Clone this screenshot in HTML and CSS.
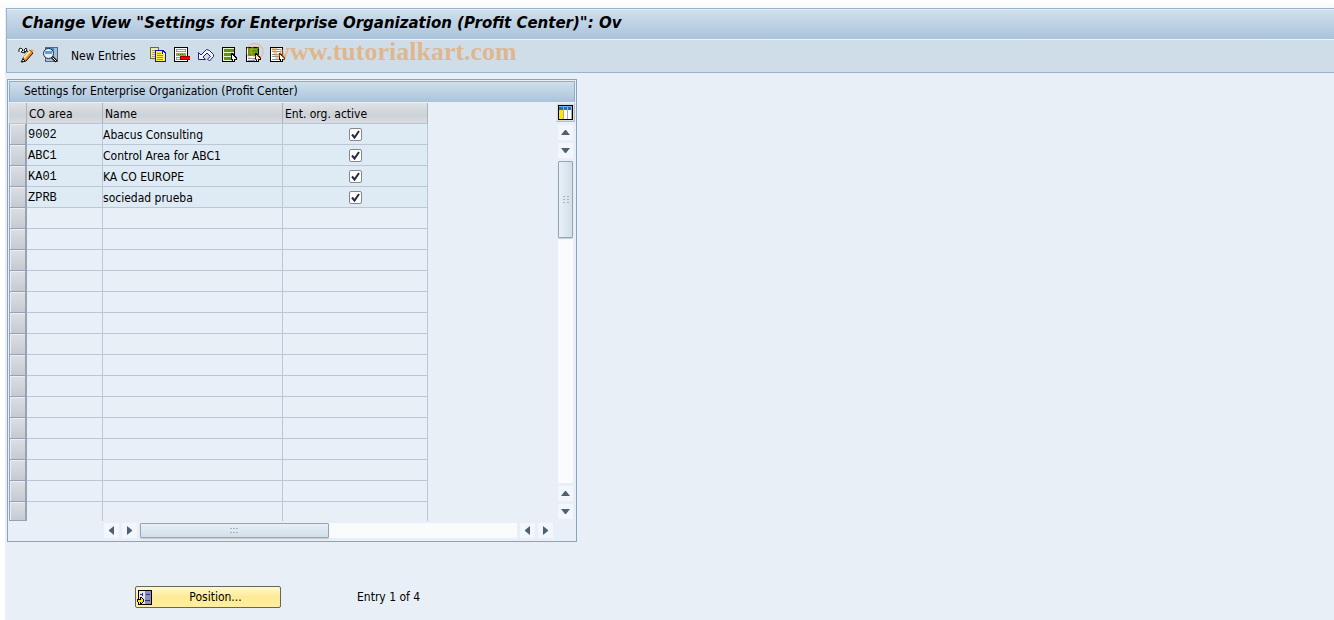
FILE: index.html
```html
<!DOCTYPE html>
<html lang="en">
<head>
    <meta charset="UTF-8">
    <meta name="viewport" content="width=device-width, initial-scale=1.0">
    <title>Change View</title>
    <link rel="stylesheet" href="styles.css">
</head>
<body>
    <header class="app-header">
        <h1 class="title">Change View "Settings for Enterprise Organization (Profit Center)": Ov</h1>
        <div class="toolbar">
            <button class="tool" aria-label="Display / Change">
                <svg width="16" height="16" viewBox="0 0 16 16">
                    <path d="M1 5V2L3 1L5 3L3 5L7 6L6 3L8 1L9 3L7 5L9 4L11 5" fill="#fff" stroke="#111" stroke-width="1"/>
                    <path d="M4 15L5 11L12 3L15 6L8 14Z" fill="#f08a1c" stroke="#111" stroke-width="1"/>
                    <path d="M6 11L12 4" stroke="#ffe9a0" stroke-width="2"/>
                    <path d="M3 15L5 12L7 14Z" fill="#fff" stroke="#111" stroke-width="1"/>
                    <path d="M12 3L14 2L16 4L15 6Z" fill="#f5a860"/>
                </svg>
            </button>
            <button class="tool" aria-label="Details">
                <svg width="16" height="16" viewBox="0 0 16 16">
                    <path d="M3 0h13v15H3z" fill="#5a6676" shape-rendering="crispEdges"/>
                    <path d="M4 1h11v13H4z" fill="#a9bcd0" shape-rendering="crispEdges"/>
                    <path d="M4 1h8v4H4z" fill="#2d8fe0"/>
                    <circle cx="6.500" cy="6.500" r="5" fill="#e2f0fc" stroke="#202838"/>
                    <path d="M3 4h7v3H3z" fill="#4aa4ec"/>
                    <path d="M10 10L14.500 14.500" stroke="#111" stroke-width="3"/>
                    <path d="M10.500 10.500L14 14" stroke="#eee" stroke-width="1"/>
                </svg>
            </button>
            <button class="tool-text">New Entries</button>
            <button class="tool" aria-label="Copy As">
                <svg width="16" height="16" viewBox="0 0 16 16" shape-rendering="crispEdges">
                    <path d="M0 0h9v12H0z" fill="#6b6b30"/>
                    <path d="M1 1h7v10H1z" fill="#f0ecb0"/>
                    <path d="M2 3h3v1H2zM2 5h3v1H2zM2 7h3v1H2zM2 9h3v1H2z" fill="#a5a560"/>
                    <path d="M5 3h8l3 3v9H5z" fill="#1010c0"/>
                    <path d="M6 4h6v3h3v7H6z" fill="#fff04a"/>
                    <path d="M13 5l2 2h-2z" fill="#fff"/>
                    <path d="M7 6h4v1H7zM7 8h6v1H7zM7 10h6v1H7zM7 12h6v1H7z" fill="#8c8c70"/>
                </svg>
            </button>
            <button class="tool" aria-label="Delete">
                <svg width="16" height="16" viewBox="0 0 16 16" shape-rendering="crispEdges">
                    <path d="M0 0h14v15H0z" fill="#000"/>
                    <path d="M1 1h12v13H1z" fill="#fff"/>
                    <path d="M2 2h10v3H2zM2 10h10v3H2z" fill="#8f97ac"/>
                    <path d="M3 3h8v1H3zM3 11h8v1H3z" fill="#fff"/>
                    <path d="M2 6h10v3H2z" fill="#86b32d"/>
                    <path d="M4 7h1v1H4zM6 7h1v1H6zM8 7h1v1H8z" fill="#4c7d10"/>
                    <path d="M6 9h10v4H6z" fill="#900"/>
                    <path d="M7 10h9v2H7z" fill="#f00"/>
                </svg>
            </button>
            <button class="tool" aria-label="Undo Change">
                <svg width="16" height="16" viewBox="0 0 16 16">
                    <path d="M.5 5.500V12.500H7.500L5 10L9 6L12.500 9.500L9.500 12L11.500 14L15.500 9.500V7.500L11.500 3.500L8.500 2.500L3 8Z" fill="#f6f8ff" stroke="#20208c" stroke-width="1"/>
                </svg>
            </button>
            <button class="tool" aria-label="Select All">
                <svg width="16" height="16" viewBox="0 0 16 16" shape-rendering="crispEdges">
                    <path d="M0 0h13v15H0z" fill="#000"/>
                    <path d="M1 1h11v13H1z" fill="#e9f3cc"/>
                    <path d="M2 2h10v3H2zM2 6h10v3H2zM2 10h10v3H2z" fill="#5f9410"/>
                    <path d="M9 6h1l5 5v2h-2v2h-2l-1-2H9z" fill="#000"/>
                    <path d="M10 8l4 4h-2v2h-1v-2h-1z" fill="#fff"/>
                </svg>
            </button>
            <button class="tool" aria-label="Select Block">
                <svg width="16" height="16" viewBox="0 0 16 16" shape-rendering="crispEdges">
                    <path d="M0 0h13v15H0z" fill="#000"/>
                    <path d="M1 1h11v13H1z" fill="#fff"/>
                    <path d="M2 1h10v8H2z" fill="#5f9410"/>
                    <path d="M3 2h8v1H3zM3 5h8v1H3z" fill="#78a828"/>
                    <path d="M2 11h7v1H2zM2 13h7v1H2z" fill="#8f97ac"/>
                    <path d="M9 6h1l5 5v2h-2v2h-2l-1-2H9z" fill="#000"/>
                    <path d="M10 8l4 4h-2v2h-1v-2h-1z" fill="#fff"/>
                </svg>
            </button>
            <button class="tool" aria-label="Deselect All">
                <svg width="16" height="16" viewBox="0 0 16 16" shape-rendering="crispEdges">
                    <path d="M0 0h13v15H0z" fill="#000"/>
                    <path d="M1 1h11v13H1z" fill="#fff"/>
                    <path d="M2 2h9v1H2zM2 4h9v1H2zM2 7h9v1H2zM2 9h7v1H2zM2 12h7v1H2z" fill="#8298aa"/>
                    <path d="M9 6h1l5 5v2h-2v2h-2l-1-2H9z" fill="#000"/>
                    <path d="M10 8l4 4h-2v2h-1v-2h-1z" fill="#fff"/>
                </svg>
            </button>
        </div>
        <span class="watermark"><span class="copy-sign">©</span> www.tutorialkart.com</span>
    </header>

    <main class="content">
        <section class="panel">
            <h2 class="panel-title">Settings for Enterprise Organization (Profit Center)</h2>
            <div class="panel-body">
                <table class="grid">
                    <thead>
                        <tr>
                            <th class="col-sel"></th>
                            <th class="col-area">CO area</th>
                            <th class="col-name">Name</th>
                            <th class="col-active">Ent. org. active</th>
                        </tr>
                    </thead>
                    <tbody id="rows">
                        <tr class="filled"><td class="sel"></td><td class="code">9002</td><td>Abacus Consulting</td><td class="check"><input type="checkbox" aria-label="9002 active" checked></td></tr>
                        <tr class="filled"><td class="sel"></td><td class="code">ABC1</td><td>Control Area for ABC1</td><td class="check"><input type="checkbox" aria-label="ABC1 active" checked></td></tr>
                        <tr class="filled"><td class="sel"></td><td class="code">KA01</td><td>KA CO EUROPE</td><td class="check"><input type="checkbox" aria-label="KA01 active" checked></td></tr>
                        <tr class="filled"><td class="sel"></td><td class="code">ZPRB</td><td>sociedad prueba</td><td class="check"><input type="checkbox" aria-label="ZPRB active" checked></td></tr>
                    </tbody>
                </table>

                <div class="vscroll">
                    <button class="config" aria-label="Configuration">
                        <svg width="15" height="15" viewBox="0 0 15 15" shape-rendering="crispEdges">
                            <path d="M0 0h15v15H0z" fill="#000"/>
                            <path d="M1 1h13v4H1z" fill="#1c6fb8"/>
                            <path d="M1 1h13v1H1z" fill="#6db8ee"/>
                            <path d="M1 5h5v9H1z" fill="#ffe600"/>
                            <path d="M6 5h8v9H6z" fill="#fff"/>
                            <path d="M5 2h1v12H5zM9 2h1v12H9zM13 2h1v12h-1z" fill="#a5adb8"/>
                        </svg>
                    </button>
                    <button class="arrow" aria-label="Scroll up"><svg width="9" height="5" viewBox="0 0 9 5"><path d="M0 5L4 0H5L9 5Z"/></svg></button>
                    <button class="arrow" aria-label="Scroll down"><svg width="9" height="5" viewBox="0 0 9 5"><path d="M0 0L4 5H5L9 0Z"/></svg></button>
                    <div class="track">
                        <div class="thumb"><svg width="6" height="8" viewBox="0 0 6 8" shape-rendering="crispEdges"><path d="M0 0h2v1H0zM4 0h2v1H4zM0 3h2v1H0zM4 3h2v1H4zM0 6h2v1H0zM4 6h2v1H4z"/></svg></div>
                    </div>
                    <button class="arrow" aria-label="Page up"><svg width="9" height="5" viewBox="0 0 9 5"><path d="M0 5L4 0H5L9 5Z"/></svg></button>
                    <button class="arrow" aria-label="Page down"><svg width="9" height="5" viewBox="0 0 9 5"><path d="M0 0L4 5H5L9 0Z"/></svg></button>
                </div>

                <div class="hscroll">
                    <button class="arrow" aria-label="Scroll left"><svg width="5" height="9" viewBox="0 0 5 9"><path d="M5 0L0 4V5L5 9Z"/></svg></button>
                    <button class="arrow" aria-label="Scroll right"><svg width="5" height="9" viewBox="0 0 5 9"><path d="M0 0L5 4V5L0 9Z"/></svg></button>
                    <div class="track">
                        <div class="thumb"><svg width="8" height="6" viewBox="0 0 8 6" shape-rendering="crispEdges"><path d="M0 0h2v1H0zM3 0h2v1H3zM6 0h2v1H6zM0 4h2v1H0zM3 4h2v1H3zM6 4h2v1H6z"/></svg></div>
                    </div>
                    <button class="arrow" aria-label="Page left"><svg width="5" height="9" viewBox="0 0 5 9"><path d="M5 0L0 4V5L5 9Z"/></svg></button>
                    <button class="arrow" aria-label="Page right"><svg width="5" height="9" viewBox="0 0 5 9"><path d="M0 0L5 4V5L0 9Z"/></svg></button>
                </div>
            </div>
        </section>

        <div class="footer">
            <button class="position-btn">
                <svg width="15" height="15" viewBox="0 0 15 15" shape-rendering="crispEdges">
                    <path d="M1 0h14v15H1z" fill="#000"/>
                    <path d="M2 1h12v13H2z" fill="#dfe4ee"/>
                    <path d="M8 1h6v13H8z" fill="#8b8cc4"/>
                    <path d="M3 4h3v1H3zM5 3h1v3H5zM9 4h4v1H9zM8 10h5v1H8z" fill="#303850"/>
                    <path d="M0 9h3V7h1l3 3v1l-3 3H3v-2H0z" fill="#000"/>
                    <path d="M1 10h3V8l2 2v1l-2 2v-1H1z" fill="#ffe800"/>
                </svg>
                <span>Position...</span>
            </button>
            <span>Entry 1 of 4</span>
        </div>
    </main>

    <script>
        // fill the rest of the table control with empty rows
        const rows = document.getElementById('rows');
        const emptyRows = 15;
        for (let i = 0; i < emptyRows; i++) {
            const row = document.createElement('tr');
            row.innerHTML = '<td class="sel"></td><td></td><td></td><td></td>';
            rows.appendChild(row);
        }
    </script>
</body>
</html>
```
FILE: styles.css
```css
* {
    box-sizing: border-box;
}

body {
    margin: 0;
    padding: 8px 0 0 6px;
    min-height: 100vh;
    background: linear-gradient(#fff, #f6f9fc) 0 0 / 100% 8px no-repeat,
        linear-gradient(90deg, #fff 5px, #e8eff6 5px);
    font-family: "DejaVu Sans Condensed", "Noto Sans", sans-serif;
    font-size: 12px;
    line-height: 16px;
    color: #000;
}

button {
    margin: 0;
    padding: 0;
    border: none;
    background: none;
    font: inherit;
    color: inherit;
    cursor: pointer;
}

svg {
    display: block;
}

.app-header {
    position: relative;
    border: 1px solid #9bb2c9;
    border-right: none;
}

.title {
    margin: 0;
    padding: 1px 15px 4px;
    border-top: 1px solid #e4eef6;
    background: linear-gradient(#cfdfec, #aac3db);
    font-family: "DejaVu Sans", sans-serif;
    font-size: 15px;
    font-style: italic;
    line-height: 24px;
    white-space: nowrap;
}

.toolbar {
    display: flex;
    align-items: center;
    gap: 8px;
    height: 33px;
    padding: 0 11px 2px;
    border-top: 1px solid #eef4f9;
    background: #cfdde8;
}

.tool-text {
    padding: 1px 6px 0 5px;
}

.watermark {
    position: absolute;
    left: 238px;
    top: 28px;
    font: bold 26px/30px "Liberation Serif", serif;
    color: rgba(240, 150, 60, 0.55);
    white-space: nowrap;
    pointer-events: none;
}

.copy-sign {
    font-weight: normal;
}

.content {
    padding: 6px 1px;
}

.panel {
    max-width: 570px;
    padding: 1px;
    border: 1px solid #86a5c3;
}

.panel-title {
    margin: 0 0 1px;
    padding: 1px 14px 3px;
    border: 1px solid #93abc3;
    border-bottom: none;
    background: linear-gradient(#cfdfec, #aac3db);
    font-size: 12px;
    font-weight: normal;
    line-height: 16px;
}

.panel-body {
    display: grid;
    grid-template-columns: 1fr 19px;
}

.grid {
    width: 419px;
    table-layout: fixed;
    border-collapse: separate;
    border-spacing: 0;
}

.grid th {
    height: 21px;
    padding: 2px 2px 0;
    border-right: 1px solid #a9b3c2;
    border-bottom: 1px solid #b8c4d0;
    background: linear-gradient(#dfe2e5, #cdd2d8 60%, #d9dde1);
    font-weight: normal;
    text-align: left;
}

.col-sel {
    width: 18px;
}

.col-area {
    width: 76px;
}

.col-name {
    width: 180px;
}

.grid td {
    height: 21px;
    padding: 2px 0 0;
    border-right: 1px solid #bcc6d4;
    border-bottom: 1px solid #bcc6d4;
}

.filled td {
    background: #deebf5;
}

.grid .sel {
    border: 1px solid #98a2b4;
    border-top: none;
    border-right-width: 2px;
    background: linear-gradient(#dcdfe4, #c5cad2);
    box-shadow: inset 1px 1px #eceef1;
}

.grid tr:last-child td {
    height: 19px;
}

.grid tr:last-child td:not(.sel) {
    border-bottom: none;
}

.grid .code {
    padding-left: 1px;
    font-family: "Liberation Mono", monospace;
}

.grid .check {
    padding: 0;
    line-height: 0;
    text-align: center;
}

.check input {
    appearance: none;
    width: 13px;
    height: 13px;
    margin: 0;
    border: 1px solid #85878c;
    border-radius: 2px;
    background: #fff;
    vertical-align: middle;
}

.check input:checked {
    background: #fff url("data:image/svg+xml,%3Csvg xmlns='http://www.w3.org/2000/svg' viewBox='0 0 11 11'%3E%3Cpath d='M2 5.500L4.500 8.500L9 2' fill='none' stroke='%23262a40' stroke-width='2'/%3E%3C/svg%3E");
}

.vscroll {
    display: flex;
    flex-direction: column;
    align-items: center;
    gap: 3px;
    padding-bottom: 2px;
}

.config {
    padding: 1px;
    border: 1px solid #b6bfc8;
    border-top-color: #e6eaee;
    border-left-color: #e6eaee;
    background: #d8dde2;
}

.arrow {
    display: flex;
    align-items: center;
    justify-content: center;
    width: 15px;
    height: 15px;
    background: #f3f6fa;
}

.arrow path {
    fill: #4c6272;
}

.track {
    flex: 1;
    background: #fafbfc;
}

.thumb {
    display: flex;
    align-items: center;
    justify-content: center;
    border: 1px solid #94a5b4;
    border-radius: 1px;
    box-shadow: 0 1px 1px #c2cbd3;
}

.thumb path {
    fill: #a2b4c4;
}

.vscroll .thumb {
    width: 15px;
    height: 77px;
    background: linear-gradient(90deg, #e9f0f6, #d2dfe9);
}

.hscroll {
    display: flex;
    gap: 3px;
    margin: 2px 3px 2px 95px;
}

.hscroll .thumb {
    width: 50%;
    height: 15px;
    background: linear-gradient(#e9f0f6, #d2dfe9);
}

.footer {
    display: flex;
    align-items: center;
    gap: 76px;
    padding: 44px 128px 0;
}

.position-btn {
    display: flex;
    align-items: center;
    width: 146px;
    height: 22px;
    padding: 0 1px;
    border: 1px solid #6a6656;
    border-radius: 2px;
    background: linear-gradient(#fff8d0, #ffeb94 50%, #ffeea2);
}

.position-btn span {
    flex: 1;
}
```
